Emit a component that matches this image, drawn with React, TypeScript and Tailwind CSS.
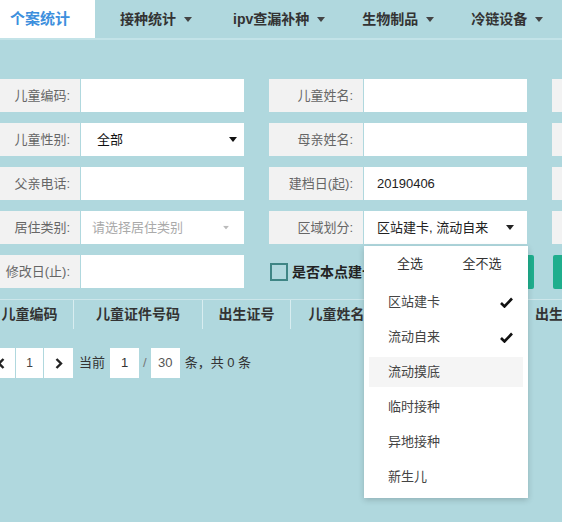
import React from "react";

const font = { fontFamily: '"Liberation Sans","Noto Sans CJK SC",sans-serif' };

function Caret({ className = "" }: { className?: string }) {
  return (
    <svg className={className} width="8" height="5" viewBox="0 0 8 5">
      <path d="M0 0 L8 0 L4 5 Z" fill="currentColor" />
    </svg>
  );
}

function Tick() {
  return (
    <svg width="13" height="11" viewBox="0 0 13 11">
      <path d="M1 6 L4.5 9.5 L12 1.5" fill="none" stroke="#111" strokeWidth="2.6" />
    </svg>
  );
}

function Field({
  label,
  children,
  className = "",
}: {
  label: string;
  children?: React.ReactNode;
  className?: string;
}) {
  return (
    <div className={`relative flex h-[33px] w-[258px] shrink-0 ${className}`}>
      <div className="flex w-[94px] shrink-0 items-center justify-end whitespace-nowrap bg-[#f2f2f2] pr-[10px] text-[13px] text-[#666]">
        {label}
      </div>
      <div className="ml-px flex flex-1 items-center whitespace-nowrap bg-white text-[13px] text-[#333]">
        {children}
      </div>
    </div>
  );
}

const menuItems = ["区站建卡", "流动自来", "流动摸底", "临时接种", "异地接种", "新生儿"];
const tabs = [
  { t: "接种统计", ml: "ml-[25px]" },
  { t: "ipv查漏补种", ml: "ml-[41px]" },
  { t: "生物制品", ml: "ml-[37px]" },
  { t: "冷链设备", ml: "ml-[37px]" },
];

export default function App() {
  return (
    <div
      className="relative h-[522px] w-[562px] overflow-hidden bg-[#b0d8de]"
      style={font}
    >
      {/* Top nav */}
      <div className="flex h-[40px] border-b-2 border-[#c3e3e8]">
        <div className="flex w-[95px] shrink-0 items-center bg-white pl-[10px] text-[15px] font-semibold text-[#3d8fdd]">
          个案统计
        </div>
        {tabs.map(({ t, ml }) => (
          <div
            key={t}
            className={`flex shrink-0 items-center gap-[8px] whitespace-nowrap text-[14px] font-bold text-[#333] ${ml}`}
          >
            <span>{t}</span>
            <Caret className="text-[#444]" />
          </div>
        ))}
      </div>

      {/* Search form */}
      <div className="ml-[-14px] mt-[39px] flex flex-col gap-[11px]">
        <div className="flex gap-[25px]">
          <Field label="儿童编码:" />
          <Field label="儿童姓名:" />
          <Field label="" />
        </div>
        <div className="flex gap-[25px]">
          <Field label="儿童性别:">
            <div className="flex w-full items-center justify-between pl-[16px] pr-[7px] text-[#111]">
              <span>全部</span>
              <Caret className="text-[#111]" />
            </div>
          </Field>
          <Field label="母亲姓名:" />
          <Field label="" />
        </div>
        <div className="flex gap-[25px]">
          <Field label="父亲电话:" />
          <Field label="建档日(起):">
            <span className="pl-[13px] text-[#222]">20190406</span>
          </Field>
          <Field label="" />
        </div>
        <div className="relative z-10 flex gap-[25px]">
          <Field label="居住类别:">
            <div className="flex w-full items-center justify-between pl-[11px] pr-[14px] text-[#aaa]">
              <span>请选择居住类别</span>
              <Caret className="scale-75 text-[#bbb]" />
            </div>
          </Field>
          <Field label="区域划分:">
            <div className="flex w-full items-center justify-between pl-[13px] pr-[13px] text-[#222]">
              <span>区站建卡, 流动自来</span>
              <Caret className="text-[#222]" />
            </div>
            {/* Dropdown menu */}
            <div className="absolute left-[95px] top-[35px] h-[252px] w-[164px] bg-white shadow-[0_2px_6px_rgba(0,0,0,0.18)]">
              <div className="flex h-[36px] items-center text-[13px] text-[#333]">
                <div className="w-1/2 pl-[10px] text-center">全选</div>
                <div className="w-1/2 pr-[10px] text-center">全不选</div>
              </div>
              <div className="mt-[5px] flex flex-col gap-[5px] px-[5px]">
                {menuItems.map((m, i) => (
                  <div
                    key={m}
                    className={`flex h-[30px] items-center justify-between pl-[19px] pr-[10px] text-[13px] text-[#444] ${
                      i === 2 ? "bg-[#f5f5f5]" : ""
                    }`}
                  >
                    <span>{m}</span>
                    {i < 2 && <Tick />}
                  </div>
                ))}
              </div>
            </div>
          </Field>
          <Field label="" />
        </div>
        <div className="flex gap-[25px]">
          <Field label="修改日(止):" />
          <div className="flex h-[34px] w-[265px] shrink-0 items-center">
            <div className="ml-px h-[18px] w-[18px] shrink-0 border-2 border-[#3f8585]" />
            <span className="ml-[4px] whitespace-nowrap text-[14px] font-bold text-[#222]">是否本点建卡</span>
            <div className="ml-auto h-full w-[70px] shrink-0 rounded-[2px] bg-[#1fae8d]" />
          </div>
          <div className="ml-[-6px] h-[34px] w-[70px] shrink-0 rounded-[2px] bg-[#1fae8d]" />
        </div>
      </div>

      {/* Table header */}
      <div className="ml-[-14px] mt-[10px] flex h-[30px] whitespace-nowrap border-t border-[#cde6ea] text-[14px] font-bold text-[#333]">
        <div className="flex w-[88px] shrink-0 items-center justify-center border-r border-[#d8edf0]">儿童编码</div>
        <div className="flex w-[129px] shrink-0 items-center justify-center border-r border-[#d8edf0]">儿童证件号码</div>
        <div className="flex w-[88px] shrink-0 items-center justify-center border-r border-[#d8edf0]">出生证号</div>
        <div className="flex w-[92px] shrink-0 items-center justify-center border-r border-[#d8edf0]">儿童姓名</div>
        <div className="flex w-[137px] shrink-0 items-center justify-center border-r border-[#d8edf0]">儿童性别</div>
        <div className="flex shrink-0 items-center pl-[15px]">出生日期</div>
      </div>

      {/* Pagination */}
      <div className="ml-[-14px] mt-[19px] flex h-[30px] items-center whitespace-nowrap text-[13px] text-[#333]">
        <div className="flex h-full w-[29px] shrink-0 items-center justify-center bg-white">
          <svg width="8" height="11" viewBox="0 0 8 11">
            <path d="M6.5 1 L2 5.5 L6.5 10" fill="none" stroke="#222" strokeWidth="2.4" />
          </svg>
        </div>
        <div className="ml-px flex h-full w-[27px] shrink-0 items-center justify-center bg-white text-[12px] text-[#444]">1</div>
        <div className="ml-px flex h-full w-[29px] shrink-0 items-center justify-center bg-white">
          <svg width="8" height="11" viewBox="0 0 8 11">
            <path d="M1.5 1 L6 5.5 L1.5 10" fill="none" stroke="#222" strokeWidth="2.4" />
          </svg>
        </div>
        <span className="ml-[6px]">当前</span>
        <div className="ml-[5px] flex h-full w-[29px] shrink-0 items-center justify-center bg-white">1</div>
        <span className="mx-[4px] text-[#777]">/</span>
        <div className="flex h-full w-[29px] shrink-0 items-center justify-center bg-white text-[#555]">30</div>
        <span className="ml-[5px]">条，共 0 条</span>
      </div>
    </div>
  );
}
